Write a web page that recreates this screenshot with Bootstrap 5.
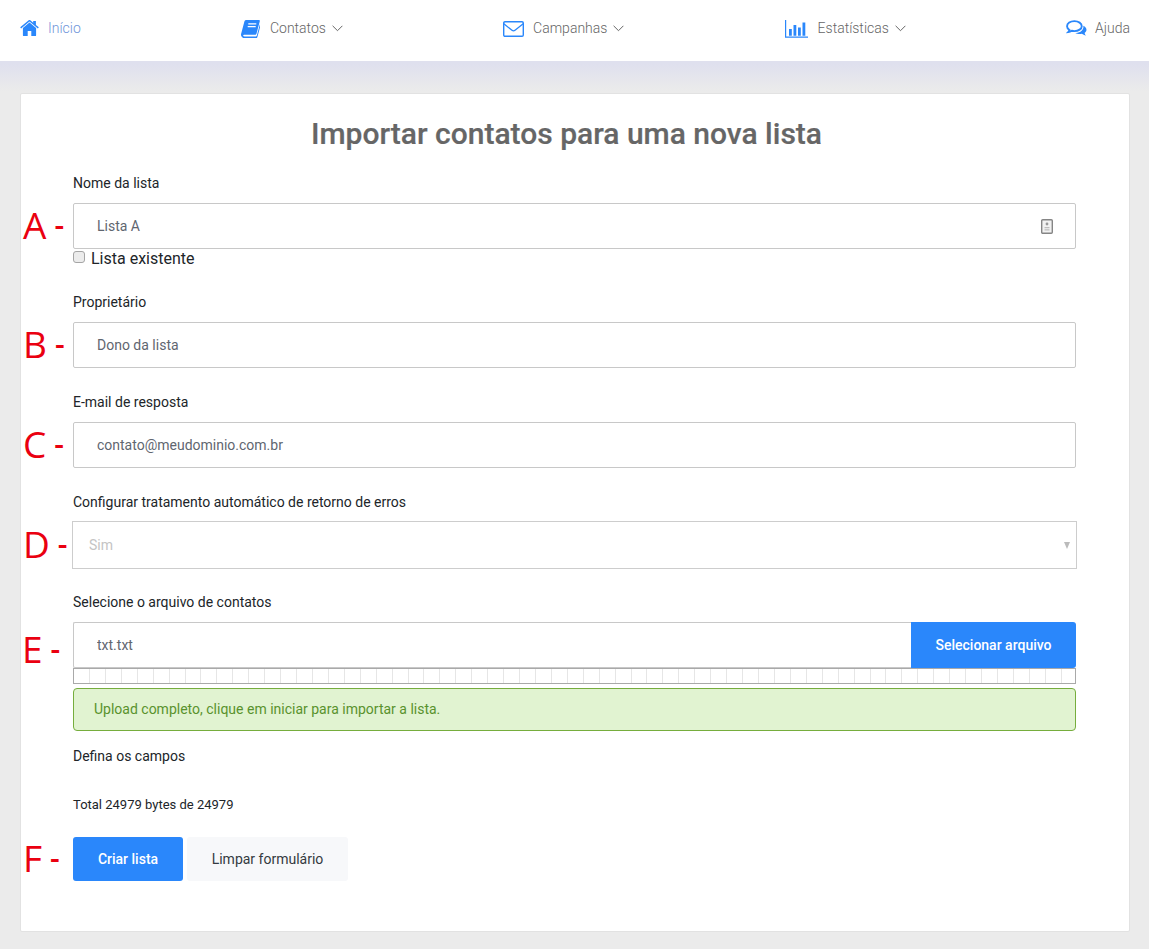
<!DOCTYPE html>
<html lang="pt-BR">
<head>
<meta charset="utf-8">
<title>Importar contatos</title>
<link href="https://cdn.jsdelivr.net/npm/bootstrap@5.3.0/dist/css/bootstrap.min.css" rel="stylesheet">
<style>
html,body{height:949px;overflow:hidden}
body{background:#ebebeb;font-family:Roboto,"Liberation Sans",sans-serif;color:#212529;font-size:14px}
.topbar{height:61px;background:#fff;padding:0 19px 4px 20px}
.topbar a{color:#666;font-size:14px;font-weight:300;text-decoration:none}
.topbar a.here{color:#6f95da}
.topbar svg.ico{display:block;flex:none}
.fade-band{height:32px;background:linear-gradient(#dfe0ee 0,#dfe0ee 3px,#ebebeb 30px)}
.sheet{margin:0 19px 0 20px;height:839px;background:#fff;border:1px solid #e2e2e2;border-radius:2px;padding:0 53px 0 52px}
.sheet-title{font-size:30px;font-weight:500;color:#666;text-align:center;line-height:36px;margin:22px 0 0;padding-right:16px;-webkit-text-stroke:.2px #666}
.fld-label{display:block;font-size:14px;line-height:20px;margin:0 0 10px;color:#212529}
.fld{position:relative}
.fld-input{height:46px;border:1px solid #c8c8c8;border-radius:2px;padding:0 23px;font-size:14px;color:#5f6670;box-shadow:none}
.fld-input:focus{border-color:#c8c8c8;box-shadow:none}
.fld-select{height:48px;margin:0 -1px;width:calc(100% + 2px);border:1px solid #cdcdcd;border-radius:0;padding:0 16px;font-size:14px;color:#c4c4c4;background:#fff;display:flex;align-items:center;justify-content:space-between}
.caret-mini{width:0;height:0;border-left:3px solid transparent;border-right:3px solid transparent;border-top:7px solid #bbb;margin-right:-10px}
.mark-letter{position:absolute;left:-50px;top:50%;transform:translateY(-50%);color:#ea0010;font-family:"Open Sans",sans-serif;font-size:37px;line-height:40px;white-space:nowrap;font-weight:400}
.mark-letter i{font-style:normal;font-size:30px;font-weight:600;margin-left:8px;position:relative;top:-3px}
.mark-letter.mark-low{margin-top:5px;left:-51px}
.id-glyph{position:absolute;right:23px;top:16px}
.check-row{height:18px;margin-top:1px;font-size:16px;line-height:18px;display:flex;align-items:center;gap:6px}
.check-row input{width:12px;height:12px;margin:0 0 4px;border:1px solid #a5a5a5;background:#ececec;border-radius:3px;appearance:none;flex:none}
.pick-btn{width:165px;height:46px;background:#2a87fb;color:#fff;border:0;border-radius:0 3px 3px 0;font-size:14px;font-weight:500;padding:0;flex:none}
.pick-name{border-radius:2px 0 0 2px;border-right:0}
.bar-track{height:16px;border:1px solid #a9a9a9;background-image:repeating-linear-gradient(90deg,#fff 0,#fff 14.93px,#e6e6e6 14.93px,#e6e6e6 15.93px)}
.done-note{height:43px;margin-top:4px;margin-bottom:0;background:#e1f3d1;border:1px solid #76ad3d;border-radius:4px;color:#59922d;font-size:14px;padding:0 20px;display:flex;align-items:center}
.go-btn,.wipe-btn{height:44px;font-size:14px;border:0;border-radius:3px;padding:0}
.go-btn{width:110px;background:#2a87fb;color:#fff;font-weight:500}
.wipe-btn{width:161px;background:#f7f8fa;color:#343a40}
.small-line{font-size:13px;line-height:20px}
</style>
</head>
<body>
<nav class="topbar d-flex justify-content-between align-items-center">
  <a href="#" class="here d-flex align-items-center">
    <svg class="ico" width="19" height="17" viewBox="0 0 19 17" style="margin-right:9px"><path fill="#2a87fb" d="M9.500 2.600 2.900 8v7.200c0 .5.400.9.800.9h4v-5h3.600v5h4c.5 0 .8-.4.8-.9V8z"/><path fill="#2a87fb" d="M18.800 7.300 15.900 4.900V1h-2.700v1.700L10.300.300a1.300 1.300 0 0 0-1.600 0L.2 7.300l.9 1.100L9.500 1.500l8.400 6.900z"/></svg>
    <span>Início</span></a>
  <a href="#" class="d-flex align-items-center">
    <svg class="ico" width="19" height="18" viewBox="0 0 19 18" style="margin-right:10px"><path fill="#2a87fb" d="M5.300 0H18c.7 0 1 .5.800 1.200l-3.200 12c-.3 1-.9 1.500-1.800 1.500H3.500c-.8 0-1.300.4-1.300.9 0 .6.500.9 1.300.9h11.300c.5 0 .8-.2 1-.8l3-11.300.9.500-3.300 12c-.2.900-.9 1.600-1.800 1.600H2.900C1.200 17.500 0 16.300 0 14.800c0-.4.100-.8.200-1.200L3.400 1.500C3.700.5 4.400 0 5.300 0z"/><path fill="#fff" d="M7.300 3.300h8v1.300h-8zM6.700 5.900h8v1.300h-8z"/></svg>
    <span>Contatos</span>
    <svg class="ico" width="11" height="7" viewBox="0 0 11 7" style="margin-left:6px"><path d="M.6.800 5.500 5.700 10.400.8" fill="none" stroke="#666" stroke-width="1"/></svg></a>
  <a href="#" class="d-flex align-items-center">
    <svg class="ico" width="21" height="16" viewBox="0 0 21 16" style="margin-right:9px"><rect x=".7" y=".7" width="19.600" height="14.600" rx="1.300" fill="none" stroke="#2a87fb" stroke-width="1.400"/><path d="M.8 2.800 9 9.300c.9.700 2.100.7 3 0l8.200-6.500" fill="none" stroke="#2a87fb" stroke-width="1.300"/></svg>
    <span>Campanhas</span>
    <svg class="ico" width="11" height="7" viewBox="0 0 11 7" style="margin-left:6px"><path d="M.6.800 5.500 5.700 10.400.8" fill="none" stroke="#666" stroke-width="1"/></svg></a>
  <a href="#" class="d-flex align-items-center">
    <svg class="ico" width="23" height="18" viewBox="0 0 23 18" style="margin-right:10px"><path d="M.6 0v17.200H23" fill="none" stroke="#2a87fb" stroke-width="1.200"/><path fill="#2a87fb" d="M4 9h2.800v6.800H4zM8.500 5h2.800v10.800H8.500zM13 7.500h2.800v8.300H13zM17.500 2.500h2.800v13.300h-2.800z"/></svg>
    <span>Estatísticas</span>
    <svg class="ico" width="11" height="7" viewBox="0 0 11 7" style="margin-left:6px"><path d="M.6.800 5.500 5.700 10.400.8" fill="none" stroke="#666" stroke-width="1"/></svg></a>
  <a href="#" class="d-flex align-items-center">
    <svg class="ico" width="21" height="18" viewBox="0 0 20 17" style="margin-right:8px"><path fill="none" stroke="#2a87fb" stroke-width="1.800" d="M8 1C4.100 1 1 3.100 1 5.800c0 1.500.9 2.700 2.300 3.600-.2.800-.6 1.400-1.200 2 1.300-.1 2.500-.6 3.400-1.200.8.200 1.600.3 2.500.3 3.900 0 7-2.100 7-4.700S11.900 1 8 1z"/><path fill="#2a87fb" d="M16.500 5.500c1.800.8 3 2.100 3 3.700 0 1.200-.7 2.300-1.800 3 .2.900.7 1.800 1.300 2.500-1.500-.2-2.900-.9-3.900-1.600-.7.200-1.400.2-2.100.2-1.600 0-3-.4-4.100-1.100 4.500.4 8.300-2.500 7.600-6.700z"/></svg>
    <span>Ajuda</span></a>
</nav>
<div class="fade-band"></div>
<main class="sheet">
  <h1 class="sheet-title">Importar contatos para uma nova lista</h1>
  <form>
    <label class="fld-label" style="margin-top:21px">Nome da lista</label>
    <div class="fld">
      <span class="mark-letter">A<i>-</i></span>
      <input class="form-control fld-input" value="Lista A">
      <svg class="id-glyph" width="12" height="15" viewBox="0 0 12 15"><rect x=".7" y=".7" width="10.600" height="13.600" rx="1" fill="#f2f2f2" stroke="#858585" stroke-width="1.400"/><circle cx="6" cy="5" r="1.400" fill="#999"/><path d="M3.500 8h5v1.200h-5zM3.500 10.300h5v1.200h-5z" fill="#bdbdbd"/></svg>
    </div>
    <div class="check-row"><input type="checkbox" aria-label="Lista existente"><span>Lista existente</span></div>
    <label class="fld-label" style="margin-top:24px">Proprietário</label>
    <div class="fld">
      <span class="mark-letter">B<i>-</i></span>
      <input class="form-control fld-input" value="Dono da lista">
    </div>
    <label class="fld-label" style="margin-top:24px">E-mail de resposta</label>
    <div class="fld">
      <span class="mark-letter">C<i>-</i></span>
      <input class="form-control fld-input" value="contato@meudominio.com.br">
    </div>
    <label class="fld-label" style="margin-top:24px;margin-bottom:9px">Configurar tratamento automático de retorno de erros</label>
    <div class="fld">
      <span class="mark-letter">D<i>-</i></span>
      <div class="fld-select"><span>Sim</span><span class="caret-mini"></span></div>
    </div>
    <label class="fld-label" style="margin-top:23px">Selecione o arquivo de contatos</label>
    <div class="fld d-flex">
      <span class="mark-letter mark-low">E<i>-</i></span>
      <input class="form-control fld-input pick-name" value="txt.txt">
      <button type="button" class="btn pick-btn">Selecionar arquivo</button>
    </div>
    <div class="bar-track"></div>
    <div class="done-note">Upload completo, clique em iniciar para importar a lista.</div>
    <label class="fld-label" style="margin-top:15px;margin-bottom:29px">Defina os campos</label>
    <div class="small-line">Total 24979 bytes de 24979</div>
    <div class="fld d-flex gap-1" style="margin-top:22px">
      <span class="mark-letter">F<i>-</i></span>
      <button type="button" class="btn go-btn">Criar lista</button>
      <button type="button" class="btn wipe-btn">Limpar formulário</button>
    </div>
  </form>
</main>
<script src="https://cdn.jsdelivr.net/npm/bootstrap@5.3.0/dist/js/bootstrap.bundle.min.js"></script>
</body>
</html>
